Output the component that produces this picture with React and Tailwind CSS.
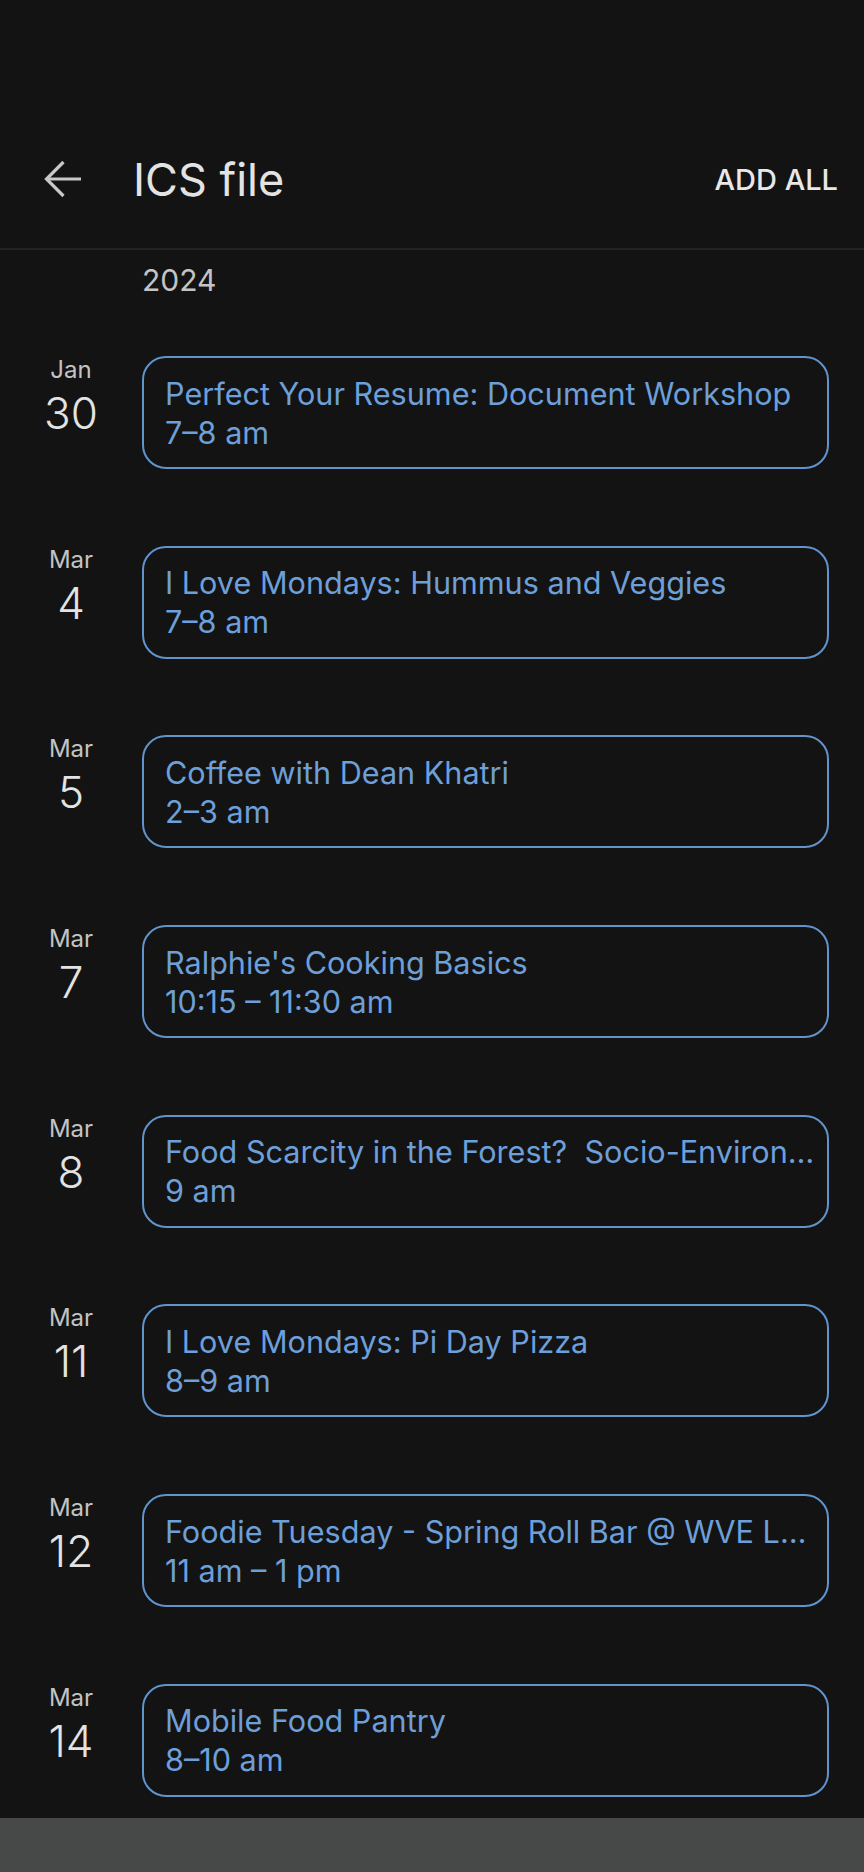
const events = [
  { month: "Jan", day: "30", title: "Perfect Your Resume: Document Workshop", time: "7–8 am" },
  { month: "Mar", day: "4", title: "I Love Mondays: Hummus and Veggies", time: "7–8 am" },
  { month: "Mar", day: "5", title: "Coffee with Dean Khatri", time: "2–3 am" },
  { month: "Mar", day: "7", title: "Ralphie's Cooking Basics", time: "10:15 – 11:30 am" },
  { month: "Mar", day: "8", title: "Food Scarcity in the Forest?  Socio-Environmental Dimensions of Food Insecurity", time: "9 am" },
  { month: "Mar", day: "11", title: "I Love Mondays: Pi Day Pizza", time: "8–9 am" },
  { month: "Mar", day: "12", title: "Foodie Tuesday - Spring Roll Bar @ WVE Lounge", time: "11 am – 1 pm" },
  { month: "Mar", day: "14", title: "Mobile Food Pantry", time: "8–10 am" },
];

function BackArrow() {
  return (
    <svg width="40" height="40" viewBox="0 0 40 40" fill="none" stroke="#c8c8c8" strokeWidth="3.2" strokeLinecap="butt" strokeLinejoin="miter">
      <path d="M4 19H39" />
      <path d="M21.5 2L4.5 19L21.5 36" />
    </svg>
  );
}

function EventRow({ ev }) {
  return (
    <div className="flex">
      <div className="w-[142px] shrink-0 flex flex-col items-center">
        <div className="text-[24px] leading-[28px] text-[#c4c4c4]">{ev.month}</div>
        <div className="text-[44px] leading-[48px] mt-[5px] font-light text-[#e3e3e3]">{ev.day}</div>
      </div>
      <div className="w-[687px] h-[113px] border-2 border-[#6193cc] rounded-[24px] pl-[21px] pr-[5px] flex flex-col justify-center text-[#6d9fd9] text-[30.6px] leading-[39px]">
        <div className="overflow-hidden text-ellipsis whitespace-pre">{ev.title}</div>
        <div>{ev.time}</div>
      </div>
    </div>
  );
}

export default function App() {
  return (
    <div className="w-[864px] h-[1872px] bg-[#131313] flex flex-col overflow-hidden" style={{ fontFamily: "Inter, 'Noto Sans', sans-serif" }}>
      <div className="h-[111px]" />
      <div className="h-[137px] flex items-center">
        <div className="ml-[42px] w-[40px] h-[40px]">
          <BackArrow />
        </div>
        <div className="ml-[51px] text-[45px] leading-[56px] text-[#e3e3e3]">ICS file</div>
        <div className="ml-auto mr-[26px] text-[29px] leading-[36px] font-medium text-[#e8e8e8]">ADD ALL</div>
      </div>
      <div className="h-[2px] bg-[#222222]" />
      <div className="flex-1 overflow-hidden">
        <div className="pl-[142px] pt-[12px] text-[30px] leading-[36px] text-[#c4c4c4]">2024</div>
        <div className="mt-[58px] flex flex-col gap-[76.7px]">
          {events.map((ev, i) => (
            <EventRow key={i} ev={ev} />
          ))}
        </div>
      </div>
      <div className="h-[54px] bg-[#474948]" />
    </div>
  );
}
